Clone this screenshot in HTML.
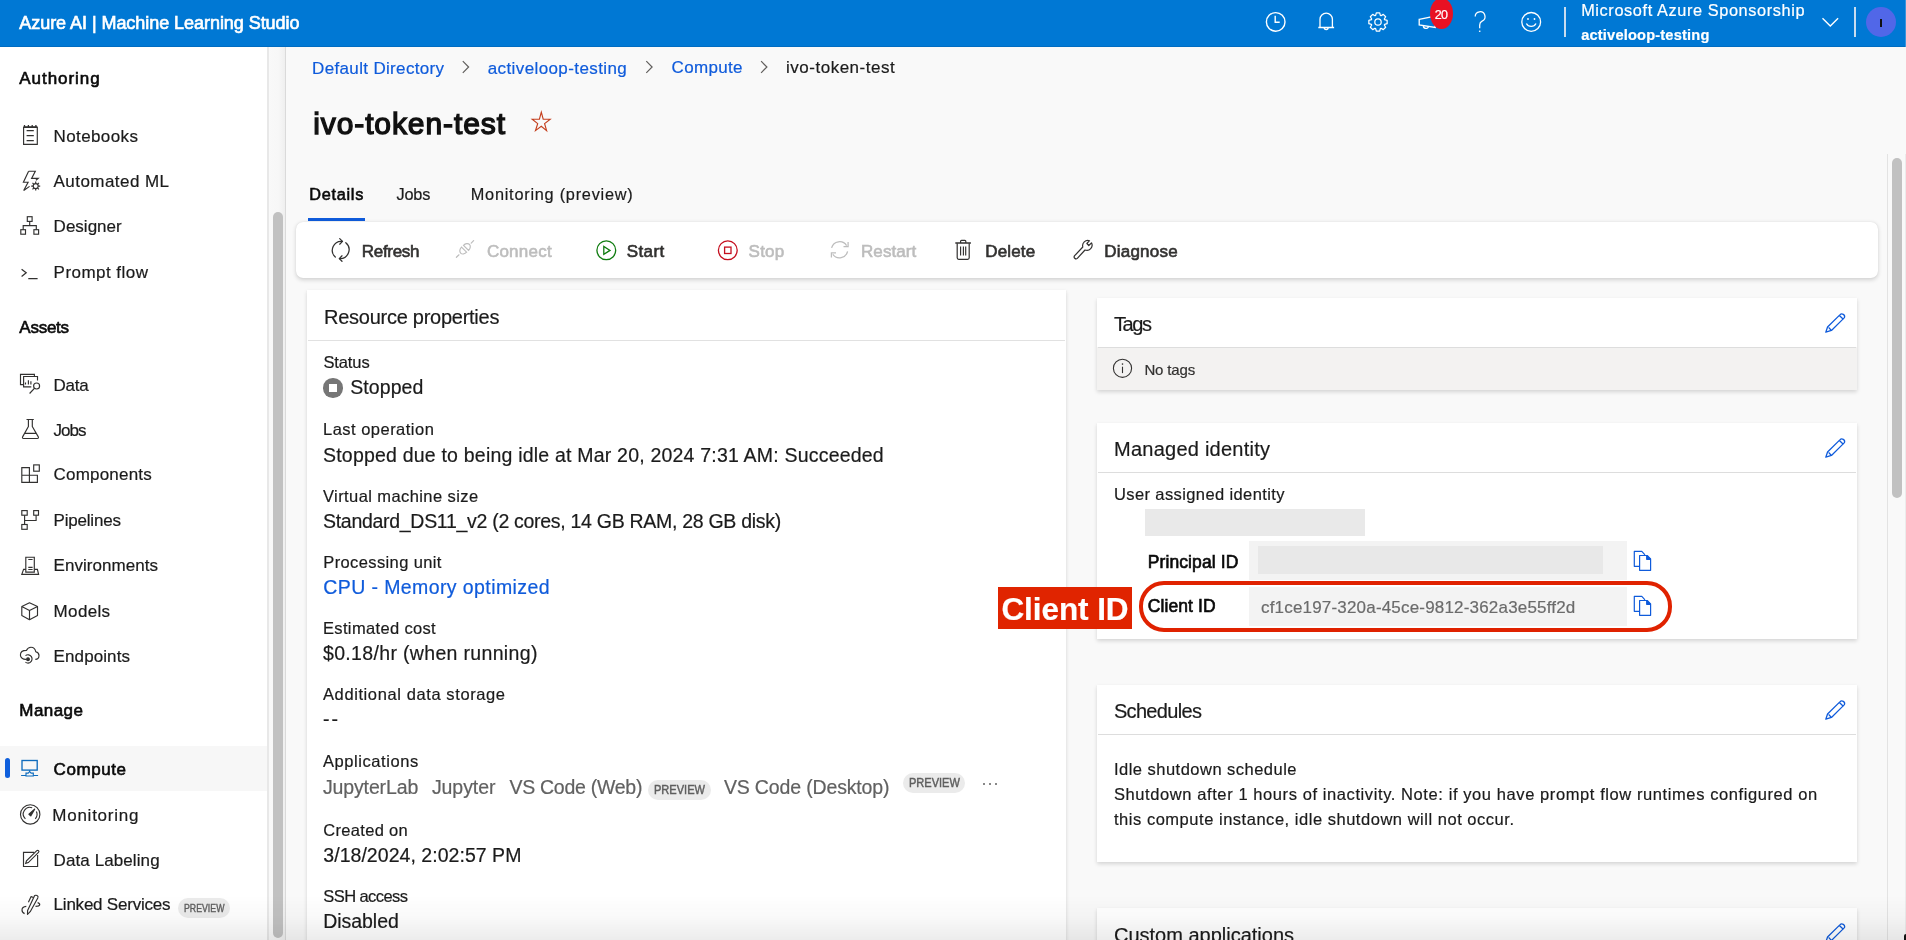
<!DOCTYPE html>
<html><head><meta charset="utf-8">
<style>
html,body{margin:0;padding:0;}
body{width:1906px;height:940px;overflow:hidden;position:relative;background:#f9f9f9;font-family:"Liberation Sans",sans-serif;}
.a{position:absolute;box-sizing:border-box;}
.t{position:absolute;white-space:pre;line-height:1;font-family:"Liberation Sans",sans-serif;-webkit-text-stroke:0.2px currentColor;}
svg{position:absolute;overflow:visible;}
.card{position:absolute;background:#fff;box-shadow:0 1.6px 4px rgba(0,0,0,.15),0 0.3px 0.9px rgba(0,0,0,.12);}
.badge{position:absolute;background:#ebebeb;border-radius:10px;color:#5e5e5e;font-size:11.5px;font-weight:700;line-height:20px;text-align:center;letter-spacing:0.2px;font-family:"Liberation Sans",sans-serif;}
</style></head><body>
<!-- header -->
<div class="a" style="left:0;top:0;width:1906px;height:47px;background:#0078d4;"></div>
<div class="a" style="left:0;top:46px;width:1906px;height:1px;background:#006cc1;"></div>
<!-- sidebar -->
<div class="a" style="left:0;top:47px;width:267px;height:893px;background:#fff;"></div>
<div class="a" style="left:267px;top:47px;width:2px;height:893px;background:#e8e8e8;"></div>
<div class="a" style="left:269px;top:47px;width:16px;height:893px;background:linear-gradient(90deg,#f9f9f9 0%,#f7f7f7 60%,#efefef 100%);"></div>
<div class="a" style="left:285px;top:47px;width:1px;height:893px;background:#dadada;"></div>
<div class="a" style="left:272.5px;top:212px;width:10.5px;height:726px;background:#c1c1c1;border-radius:5.5px;"></div>
<!-- selected row -->
<div class="a" style="left:0;top:746px;width:267px;height:45px;background:#f7f7f7;"></div>
<div class="a" style="left:5px;top:758px;width:4.6px;height:20px;background:#0f5fdc;border-radius:3px;"></div>

<!-- sidebar icons -->
<svg style="left:15px;top:120px" width="30" height="30" viewBox="0 0 30 30" fill="none" stroke="#323130" stroke-width="1.15">
 <path d="M8.6 7.3h13.7v17H8.6z"/>
 <path d="M8.6 7.1h13.7" stroke-width="1.7"/>
 <path d="M9.5 5v2M13.4 5v2M17.2 5v2M20.9 5v2" stroke-width="1.3"/>
 <path d="M11.6 10.6h7.2M11.6 15.6h7.2M11.6 20.6h7.2" stroke-width="1.25"/>
</svg>
<svg style="left:15px;top:165px" width="30" height="30" viewBox="0 0 30 30" fill="none" stroke="#323130" stroke-width="1.15" stroke-linejoin="miter">
 <path d="M28.6 171.2H35.3L31.6 178.4H38.2L35.9 180.3" transform="translate(-15 -165)"/>
 <path d="M28.6 171.2L23.4 182.2H28.1L23.7 190.5L29.6 186.4" transform="translate(-15 -165)"/>
 <circle cx="20.7" cy="21.1" r="2.5"/>
 <path d="M20.7 16.6v2M20.7 23.6v2M16.2 21.1h2M23.2 21.1h2M17.5 17.9l1.4 1.4M22.5 22.9l1.4 1.4M17.5 24.3l1.4-1.4M22.5 19.3l1.4-1.4" stroke-width="1.2"/>
</svg>
<svg style="left:15px;top:210px" width="30" height="30" viewBox="0 0 30 30" fill="none" stroke="#323130" stroke-width="1.15">
 <rect x="12.3" y="6.7" width="4.8" height="4.7"/>
 <rect x="5.8" y="19.7" width="4.7" height="4.5"/>
 <rect x="18.9" y="19.7" width="4.7" height="4.5"/>
 <path d="M14.7 11.4v4.2M8.2 19.7v-4.1h13.1v4.1"/>
</svg>
<svg style="left:15px;top:262px" width="30" height="20" viewBox="0 0 30 20" fill="none" stroke="#323130" stroke-width="1.25">
 <path d="M6.6 7.2l4.6 3.6-4.6 3.6M13.3 16.6h9.3"/>
</svg>
<svg style="left:15px;top:370px" width="30" height="30" viewBox="0 0 30 30" fill="none" stroke="#323130" stroke-width="1.15">
 <path d="M8.4 14.6H5.5V4.3h13.9v2.1"/>
 <path d="M16.3 16.8H8.6V6.5h13.9v4.1"/>
 <path d="M10.5 14.6v-2.2M13.4 14.6v-4.3M15.9 14.6v-3.3"/>
 <circle cx="21.6" cy="16" r="3"/>
 <path d="M19.4 18.3l-4.8 5.2"/>
</svg>
<svg style="left:15px;top:415px" width="30" height="30" viewBox="0 0 30 30" fill="none" stroke="#323130" stroke-width="1.15" stroke-linejoin="round">
 <path d="M11.5 4.5h7.3M13.4 4.6v6.9L7.6 21.9c-.4.8 0 1.6.9 1.6h13.9c.9 0 1.3-.8.9-1.6L17.3 11.5V4.6M9.6 18.4h11.1"/>
</svg>
<svg style="left:15px;top:460px" width="30" height="30" viewBox="0 0 30 30" fill="none" stroke="#323130" stroke-width="1.15">
 <path d="M6.8 7.6h7.6v14.7H6.8zM6.8 15.2h15.6v7.1H14.4"/>
 <rect x="18.7" y="4.9" width="5.6" height="6.3"/>
</svg>
<svg style="left:15px;top:505px" width="30" height="30" viewBox="0 0 30 30" fill="none" stroke="#323130" stroke-width="1.15">
 <rect x="6.8" y="5.6" width="5.4" height="4.6"/>
 <rect x="18.7" y="5.6" width="4.8" height="4.6"/>
 <rect x="6.8" y="19.5" width="5.4" height="4.8"/>
 <path d="M9.6 10.2v9.3M21.1 10.2v5.3H9.6"/>
</svg>
<svg style="left:15px;top:551px" width="30" height="30" viewBox="0 0 30 30" fill="none" stroke="#323130" stroke-width="1.15">
 <path d="M10.8 21.1V6.2h8.5v14.9z"/>
 <path d="M13.3 8.5h4.3M13.3 16.4h4.3M13.3 18.5h4.3" stroke-width="1.1"/>
 <path d="M10.8 18.4H8.6L6.8 23.4h16.8l-1.2-5H19.3"/>
</svg>
<svg style="left:15px;top:596px" width="30" height="30" viewBox="0 0 30 30" fill="none" stroke="#323130" stroke-width="1.15" stroke-linejoin="round">
 <path d="M14.5 6.8l8 3.7v9l-8 4.2-7.7-4.2v-9zM6.8 10.5l7.7 3.9 8-3.9M14.5 14.4v9.3"/>
</svg>
<svg style="left:15px;top:641px" width="30" height="30" viewBox="0 0 30 30" fill="none" stroke="#323130" stroke-width="1.15">
 <path d="M11 18.4c-3 .1-5.6-1.6-5.6-4.4 0-2.6 2-4.6 6-4.6 1-2.2 2.6-3.2 4.6-3.2 2.6 0 4.2 1.8 4.8 4.6 2 .5 3.2 2 3.2 3.7 0 2.3-1.6 3.9-3.7 3.9"/>
 <path d="M10.5 14.6c1.8-1.4 4.6-1 5.9 1 1.3 2.1.6 4.9-1.4 6-1.4.7-3.2.6-4.6-.5"/>
 <circle cx="13" cy="18.2" r="1.4" fill="#323130"/>
</svg>
<svg style="left:15px;top:753px" width="30" height="30" viewBox="0 0 30 30" fill="none" stroke="#0f6cbd" stroke-width="1.35">
 <rect x="7" y="7.5" width="15.2" height="9.6"/>
 <path d="M14.6 17.2v1.4l-1.4 1.5h-2.2v2.9h7.3v-2.9h-2.2l-1.4-1.5" stroke-width="1.15"/>
 <path d="M6.1 22.5h4.9M18.3 22.5h4.8" stroke-width="1.15"/>
</svg>
<svg style="left:15px;top:799px" width="30" height="30" viewBox="0 0 30 30" fill="none" stroke="#323130" stroke-width="1.15">
 <circle cx="15.2" cy="15.4" r="9.7"/>
 <path d="M10.4 19.8A6.6 6.6 0 0 1 17.2 8.8"/>
 <path d="M21.4 12.5a6.6 6.6 0 0 1-1.1 7.3"/>
 <path d="M14 15.3l5.6-5.1-3.9 6.6z" fill="#323130" stroke-width="1.3" stroke-linejoin="round"/>
</svg>
<svg style="left:15px;top:844px" width="30" height="30" viewBox="0 0 30 30" fill="none" stroke="#323130" stroke-width="1.15">
 <path d="M19.2 8.4H8.5v14.1h14.1V11"/>
 <path d="M21.8 6.7a1.2 1.2 0 0 1 1.7 1.7L13.3 18.6l-2.6.8.8-2.6z"/>
</svg>
<svg style="left:15px;top:889px" width="30" height="30" viewBox="0 0 30 30" fill="none" stroke="#323130" stroke-width="1.15" stroke-linejoin="round">
 <path d="M19.4 6.9c.5-.8 1.8-.9 2.7-.3.9.5 1.1 1.6.7 2.4L15.2 22.7l-2.7 2.6.1-3.8z"/>
 <path d="M18.5 8.5l-2.4-.9-2.7 5.6"/>
 <path d="M11.3 17.4c-2.4.2-4.3 1.6-4.3 3.6 0 1.8 1.3 3.1 2.6 3.6"/>
 <path d="M22.6 13.6c1.5.4 2.3 1.3 2.1 2.3-.2 1-1.3 1.5-4.2 1.5"/>
</svg>
<div class="a" style="left:178.2px;top:898px;width:51.6px;height:19.7px;background:#ebebeb;border-radius:10px;"></div>

<!-- header icons -->
<svg style="left:1264px;top:10px" width="24" height="24" viewBox="0 0 24 24" fill="none" stroke="#fff" stroke-width="1.4">
 <circle cx="11.7" cy="11.9" r="9.3"/>
 <path d="M11.2 5.7v6.6h4.5"/>
</svg>
<svg style="left:1317px;top:12px" width="18" height="20" viewBox="0 0 18 20" fill="none" stroke="#fff" stroke-width="1.3">
 <path d="M3 15.4V7.3a6.2 6.2 0 0 1 12.4 0v8.1M1.3 15.5h15.8M7.2 15.6a2 2 0 0 0 4 0"/>
</svg>
<svg style="left:1366.2px;top:9.9px" width="24" height="24" viewBox="0 0 24 24" fill="none" stroke="#fff" stroke-width="1.25" stroke-linejoin="round">
 <path d="M9.66 5.40 L10.31 2.86 L13.69 2.86 L14.34 5.40 L15.01 5.68 L17.27 4.34 L19.66 6.73 L18.32 8.99 L18.60 9.66 L21.14 10.31 L21.14 13.69 L18.60 14.34 L18.32 15.01 L19.66 17.27 L17.27 19.66 L15.01 18.32 L14.34 18.60 L13.69 21.14 L10.31 21.14 L9.66 18.60 L8.99 18.32 L6.73 19.66 L4.34 17.27 L5.68 15.01 L5.40 14.34 L2.86 13.69 L2.86 10.31 L5.40 9.66 L5.68 8.99 L4.34 6.73 L6.73 4.34 L8.99 5.68Z"/>
 <circle cx="12" cy="12" r="3.2"/>
</svg>
<svg style="left:1416.6px;top:14.3px" width="22" height="18" viewBox="0 0 22 18" fill="none" stroke="#fff" stroke-width="1.3">
 <path d="M2.2 5.3l16-3.2v11.4l-16-2.6z"/>
 <path d="M6.5 11.5a2.5 2.5 0 0 0 5 .8"/>
</svg>
<div class="a" style="left:1430px;top:-2px;width:23px;height:31px;background:#e81123;border-radius:50%;"></div>
<svg style="left:1472px;top:10px" width="16" height="24" viewBox="0 0 16 24" fill="none" stroke="#fff" stroke-width="1.25">
 <path d="M3.2 6.6a4.9 4.9 0 1 1 6.9 4.5c-1.6.8-2.4 2-2.4 3.9v3.2"/>
 <path d="M7.7 20.6v1.3" stroke-width="1.5"/>
</svg>
<svg style="left:1520px;top:10px" width="24" height="24" viewBox="0 0 24 24" fill="none" stroke="#fff" stroke-width="1.3">
 <circle cx="11.2" cy="11.9" r="9.4"/>
 <path d="M6.4 13.5a5.4 5.4 0 0 0 9.6 0"/>
 <circle cx="8" cy="9" r="0.9" fill="#fff" stroke="none"/>
 <circle cx="14.5" cy="9" r="0.9" fill="#fff" stroke="none"/>
</svg>
<div class="a" style="left:1564px;top:7px;width:1.5px;height:30px;background:#c9dcef;"></div>
<svg style="left:1821px;top:16px" width="20" height="12" viewBox="0 0 20 12" fill="none" stroke="#fff" stroke-width="1.4">
 <path d="M1.5 2.2l7.8 7.8 7.8-7.8"/>
</svg>
<div class="a" style="left:1854px;top:7px;width:1.5px;height:30px;background:#c9dcef;"></div>
<div class="a" style="left:1866px;top:6.5px;width:30px;height:30px;background:#5167e8;border-radius:50%;"></div>
<div class="a" style="left:1880px;top:19px;width:1.5px;height:7.5px;background:#111;"></div>
<div class="a" style="left:1905px;top:0;width:1px;height:47px;background:#3a94dc;"></div>

<!-- tab underline -->
<div class="a" style="left:308px;top:218px;width:57px;height:2.8px;background:#0f5bdb;"></div>

<!-- toolbar card -->
<div class="a" style="left:295.5px;top:221.5px;width:1582px;height:56.5px;background:#fff;border-radius:7px;box-shadow:0 1.5px 4px rgba(0,0,0,.16),0 0 1px rgba(0,0,0,.10);"></div>
<svg style="left:326px;top:235px" width="30" height="30" viewBox="0 0 30 30" fill="none" stroke="#323130" stroke-width="1.25" stroke-linecap="round" stroke-linejoin="round">
 <path d="M16.4 6.4A9 9 0 0 0 9.3 22"/>
 <path d="M13.7 3.6l2.8 2.8-2.8 2.8"/>
 <path d="M19.8 7.7A9 9 0 0 1 13.5 23.6"/>
 <path d="M16 20.8l-2.7 2.8 2.7 2.7"/>
</svg>
<svg style="left:450px;top:235px" width="30" height="30" viewBox="0 0 30 30" fill="none" stroke="#bdbdbd" stroke-width="1.2" stroke-linecap="round">
 <path d="M11.5 12.1L16.6 17.2A3.6 4.8 45 0 1 11.5 12.1Z"/>
 <path d="M13.5 10.3L18.6 15.4A3.6 4.8 45 0 0 13.5 10.3Z"/>
 <path d="M6.4 22.3l2.6-2.5M21.2 8.1l2.4-2.4"/>
</svg>
<svg style="left:595px;top:238.5px" width="23" height="23" viewBox="0 0 23 23" fill="none" stroke="#107c10" stroke-width="1.3">
 <circle cx="11.3" cy="11.3" r="9.4"/>
 <path d="M8.8 7.5v7.8l6.2-3.9z"/>
</svg>
<svg style="left:716px;top:238.5px" width="23" height="23" viewBox="0 0 23 23" fill="none" stroke="#c50f1f" stroke-width="1.3">
 <circle cx="11.8" cy="11.3" r="9.4"/>
 <rect x="8.6" y="8.1" width="6.4" height="6.4"/>
</svg>
<svg style="left:825px;top:235px" width="30" height="30" viewBox="0 0 30 30" fill="none" stroke="#bdbdbd" stroke-width="1.25">
 <path d="M6.6 12.8A8.3 8.3 0 0 1 21.6 10.6"/>
 <path d="M23.1 7v4.7h-4.6"/>
 <path d="M22.6 16.3A8.3 8.3 0 0 1 7.8 19.4"/>
 <path d="M6.4 22.6v-4.7H11"/>
</svg>
<svg style="left:950px;top:236px" width="30" height="28" viewBox="0 0 30 28" fill="none" stroke="#323130" stroke-width="1.2">
 <path d="M5.3 7h15.6" stroke-width="1.5"/>
 <path d="M10.6 7V5.2a.9.9 0 0 1 .9-.9h3.4a.9.9 0 0 1 .9.9V7"/>
 <path d="M7.2 7.2v14.6a1.5 1.5 0 0 0 1.5 1.5h9a1.5 1.5 0 0 0 1.5-1.5V7.2"/>
 <path d="M10.6 10.4v9.2M13.4 10.4v9.2M15.7 10.4v9.2" stroke-width="1.15"/>
</svg>
<svg style="left:1068px;top:236px" width="30" height="28" viewBox="0 0 30 28" fill="none" stroke="#323130" stroke-width="1.2" stroke-linejoin="round">
 <path d="M14.8 11A5.2 5.2 0 0 1 21.5 4.7L18.9 7.5 20.8 9.5 23.5 6.8A5.2 5.2 0 0 1 17 14L9.34 22.34A1.9 1.9 0 0 1 6.66 19.66Z"/>
</svg>

<!-- resource properties card -->
<div class="card" style="left:307px;top:290px;width:759px;height:700px;"></div>
<div class="a" style="left:308px;top:340px;width:757px;height:1px;background:#e1e1e1;"></div>
<div class="a" style="left:323.4px;top:378.2px;width:19.4px;height:19.4px;background:#767676;border-radius:50%;"></div>
<div class="a" style="left:329px;top:384.3px;width:8.2px;height:7.6px;background:#fff;"></div>
<div class="a" style="left:648.2px;top:780.1px;width:62.7px;height:19.9px;background:#ebebeb;border-radius:10px;"></div>
<div class="a" style="left:903px;top:773.2px;width:61.6px;height:19.6px;background:#ebebeb;border-radius:10px;"></div>
<div class="a" style="left:983px;top:782.5px;width:2.4px;height:2.4px;background:#616161;border-radius:50%;"></div>
<div class="a" style="left:989px;top:782.5px;width:2.4px;height:2.4px;background:#616161;border-radius:50%;"></div>
<div class="a" style="left:995px;top:782.5px;width:2.4px;height:2.4px;background:#616161;border-radius:50%;"></div>

<!-- tags card -->
<div class="card" style="left:1097px;top:298px;width:760px;height:92px;"></div>
<div class="a" style="left:1097px;top:347px;width:760px;height:43px;background:#f3f2f1;"></div>
<div class="a" style="left:1098px;top:347px;width:758px;height:1.2px;background:#dddddd;"></div>
<svg style="left:1112px;top:357.5px" width="21" height="21" viewBox="0 0 21 21" fill="none" stroke="#323130" stroke-width="1.1">
 <circle cx="10.5" cy="10.3" r="9.1"/>
 <path d="M10.5 8.7v6.4"/>
 <circle cx="10.5" cy="6.1" r="0.8" fill="#323130" stroke="none"/>
</svg>

<!-- managed identity card -->
<div class="card" style="left:1097px;top:422.6px;width:760px;height:216.5px;"></div>
<div class="a" style="left:1098px;top:472px;width:758px;height:1.2px;background:#dddddd;"></div>
<div class="a" style="left:1144.5px;top:509.3px;width:220px;height:27px;background:#e9e9e9;"></div>
<div class="a" style="left:1249px;top:541.2px;width:377.7px;height:38.6px;background:#f3f3f3;"></div>
<div class="a" style="left:1258px;top:545.8px;width:344.5px;height:28.5px;background:#e8e8e8;"></div>
<div class="a" style="left:1249px;top:586.8px;width:377.7px;height:39.2px;background:#f3f3f3;"></div>

<!-- schedules card -->
<div class="card" style="left:1097px;top:684.8px;width:760px;height:177px;"></div>
<div class="a" style="left:1098px;top:734px;width:758px;height:1.2px;background:#dddddd;"></div>
<!-- custom apps card -->
<div class="card" style="left:1097px;top:908.2px;width:760px;height:100px;"></div>

<!-- pencils -->
<svg style="left:1820px;top:308px" width="30" height="30" viewBox="0 0 30 30" fill="none" stroke="#0f5bdb" stroke-width="1.3" stroke-linejoin="round">
 <path d="M5.8 24.2L7.55 19.05L19.85 6.85A2.75 2.75 0 0 1 24.45 9.65L11.45 22.45Z"/>
 <path d="M19.4 7.5l3.9 3.7M8.6 19.4l2.6 2.8"/>
</svg>
<svg style="left:1820px;top:432.6px" width="30" height="30" viewBox="0 0 30 30" fill="none" stroke="#0f5bdb" stroke-width="1.3" stroke-linejoin="round">
 <path d="M5.8 24.2L7.55 19.05L19.85 6.85A2.75 2.75 0 0 1 24.45 9.65L11.45 22.45Z"/>
 <path d="M19.4 7.5l3.9 3.7M8.6 19.4l2.6 2.8"/>
</svg>
<svg style="left:1820px;top:694.8px" width="30" height="30" viewBox="0 0 30 30" fill="none" stroke="#0f5bdb" stroke-width="1.3" stroke-linejoin="round">
 <path d="M5.8 24.2L7.55 19.05L19.85 6.85A2.75 2.75 0 0 1 24.45 9.65L11.45 22.45Z"/>
 <path d="M19.4 7.5l3.9 3.7M8.6 19.4l2.6 2.8"/>
</svg>
<svg style="left:1820px;top:918.2px" width="30" height="30" viewBox="0 0 30 30" fill="none" stroke="#0f5bdb" stroke-width="1.3" stroke-linejoin="round">
 <path d="M5.8 24.2L7.55 19.05L19.85 6.85A2.75 2.75 0 0 1 24.45 9.65L11.45 22.45Z"/>
 <path d="M19.4 7.5l3.9 3.7M8.6 19.4l2.6 2.8"/>
</svg>
<!-- copy icons -->
<svg style="left:1628px;top:546px" width="30" height="30" viewBox="0 0 30 30" fill="none" stroke="#0f5bdb" stroke-width="1.2" stroke-linejoin="round">
 <path d="M11.4 20.3H6.3V5.4h7.5l3.2 3.4"/>
 <path d="M11.6 9.5h7.6l3.4 3.4v11.4H11.6z"/>
 <path d="M18.7 9.7v3.6h3.7z" fill="#0f5bdb"/>
</svg>
<svg style="left:1628px;top:591px" width="30" height="30" viewBox="0 0 30 30" fill="none" stroke="#0f5bdb" stroke-width="1.2" stroke-linejoin="round">
 <path d="M11.4 20.3H6.3V5.4h7.5l3.2 3.4"/>
 <path d="M11.6 9.5h7.6l3.4 3.4v11.4H11.6z"/>
 <path d="M18.7 9.7v3.6h3.7z" fill="#0f5bdb"/>
</svg>

<!-- annotation -->
<div class="a" style="left:1139.2px;top:581.3px;width:533.3px;height:50.8px;border:4.8px solid #e02200;border-radius:25px;"></div>
<div class="a" style="left:998px;top:587.2px;width:133.9px;height:41.5px;background:#e02400;"></div>

<!-- right scrollbar -->
<div class="a" style="left:1887px;top:154px;width:1px;height:786px;background:#e3e3e3;"></div>
<div class="a" style="left:1888px;top:154px;width:18px;height:786px;background:#f9f9f9;"></div>
<div class="a" style="left:1892px;top:157.7px;width:10.3px;height:340.5px;background:#c1c1c1;border-radius:5.2px;"></div>
<div class="a" style="left:1905px;top:154px;width:1px;height:786px;background:#ececec;"></div>

<!-- bottom fade -->
<div class="a" style="left:0;top:895px;width:1906px;height:45px;background:linear-gradient(180deg,rgba(0,0,0,0) 0%,rgba(0,0,0,0.025) 50%,rgba(0,0,0,0.075) 100%);z-index:5;"></div>
<!-- breadcrumb chevrons -->
<svg style="left:461px;top:60px" width="10" height="14" viewBox="0 0 10 14" fill="none" stroke="#605e5c" stroke-width="1.2"><path d="M1.8 1.2l5.8 5.8-5.8 5.8"/></svg>
<svg style="left:645px;top:60px" width="10" height="14" viewBox="0 0 10 14" fill="none" stroke="#605e5c" stroke-width="1.2"><path d="M1.3 1.2l5.8 5.8-5.8 5.8"/></svg>
<svg style="left:760px;top:60px" width="10" height="14" viewBox="0 0 10 14" fill="none" stroke="#605e5c" stroke-width="1.2"><path d="M1.1 1.2l5.8 5.8-5.8 5.8"/></svg>
<!-- star -->
<svg style="left:526px;top:106px" width="30" height="30" viewBox="0 0 30 30" fill="none" stroke="#c43e1c" stroke-width="1.15" stroke-linejoin="miter">
 <path d="M15.3 6.2L17.2 13.1L24.2 13.3L18.6 17.6L20.6 24.6L15.3 20.3L9.5 24.6L11.7 17.6L6.2 13.3L13.4 13.1Z"/>
</svg>
<div class="a" style="left:1904.2px;top:933.5px;width:1.8px;height:6.5px;background:#111;border-top-left-radius:2px;z-index:6;"></div>

<div style="position:absolute;left:0;top:0;width:1906px;height:940px;will-change:transform;">
<div class='t' style='left:19.3px;top:14.0px;font-size:18px;font-weight:400;color:#fff;letter-spacing:-0.050px;-webkit-text-stroke:0.65px #fff;'>Azure AI | Machine Learning Studio</div>
<div class='t' style='left:1581.2px;top:1.9px;font-size:16.3px;font-weight:400;color:#fff;letter-spacing:0.618px;'>Microsoft Azure Sponsorship</div>
<div class='t' style='left:1581.2px;top:27.7px;font-size:14.6px;font-weight:700;color:#fff;letter-spacing:0.190px;'>activeloop-testing</div>
<div class='t' style='left:1434.8px;top:9.0px;font-size:12.5px;font-weight:400;color:#fff;letter-spacing:-0.806px;'>20</div>
<div class='t' style='left:19.3px;top:69.6px;font-size:17px;font-weight:400;color:#0a0a0a;letter-spacing:0.952px;-webkit-text-stroke:0.61px #0a0a0a;'>Authoring</div>
<div class='t' style='left:53.6px;top:127.5px;font-size:17px;font-weight:400;color:#1b1b1b;letter-spacing:0.377px;'>Notebooks</div>
<div class='t' style='left:53.6px;top:173.3px;font-size:17px;font-weight:400;color:#1b1b1b;letter-spacing:0.440px;'>Automated ML</div>
<div class='t' style='left:53.6px;top:218.2px;font-size:17px;font-weight:400;color:#1b1b1b;letter-spacing:0.008px;'>Designer</div>
<div class='t' style='left:53.6px;top:263.8px;font-size:17px;font-weight:400;color:#1b1b1b;letter-spacing:0.465px;'>Prompt flow</div>
<div class='t' style='left:19.3px;top:318.6px;font-size:17px;font-weight:400;color:#0a0a0a;letter-spacing:-0.246px;-webkit-text-stroke:0.61px #0a0a0a;'>Assets</div>
<div class='t' style='left:53.6px;top:376.6px;font-size:17px;font-weight:400;color:#1b1b1b;letter-spacing:-0.307px;'>Data</div>
<div class='t' style='left:53.6px;top:421.8px;font-size:17px;font-weight:400;color:#1b1b1b;letter-spacing:-0.974px;'>Jobs</div>
<div class='t' style='left:53.6px;top:466.4px;font-size:17px;font-weight:400;color:#1b1b1b;letter-spacing:0.190px;'>Components</div>
<div class='t' style='left:53.6px;top:511.9px;font-size:17px;font-weight:400;color:#1b1b1b;letter-spacing:-0.213px;'>Pipelines</div>
<div class='t' style='left:53.6px;top:557.4px;font-size:17px;font-weight:400;color:#1b1b1b;letter-spacing:0.042px;'>Environments</div>
<div class='t' style='left:53.6px;top:602.9px;font-size:17px;font-weight:400;color:#1b1b1b;letter-spacing:0.338px;'>Models</div>
<div class='t' style='left:53.6px;top:647.6px;font-size:17px;font-weight:400;color:#1b1b1b;letter-spacing:0.097px;'>Endpoints</div>
<div class='t' style='left:19.3px;top:702.4px;font-size:17px;font-weight:400;color:#0a0a0a;letter-spacing:0.433px;-webkit-text-stroke:0.61px #0a0a0a;'>Manage</div>
<div class='t' style='left:53.6px;top:761.1px;font-size:17px;font-weight:400;color:#0a0a0a;letter-spacing:0.553px;-webkit-text-stroke:0.61px #0a0a0a;'>Compute</div>
<div class='t' style='left:52.3px;top:806.6px;font-size:17px;font-weight:400;color:#1b1b1b;letter-spacing:0.747px;'>Monitoring</div>
<div class='t' style='left:53.6px;top:851.8px;font-size:17px;font-weight:400;color:#1b1b1b;letter-spacing:0.090px;'>Data Labeling</div>
<div class='t' style='left:53.6px;top:896.4px;font-size:17px;font-weight:400;color:#1b1b1b;letter-spacing:-0.223px;'>Linked Services</div>
<div class='t' style='left:312.1px;top:59.6px;font-size:17px;font-weight:400;color:#0f5bdb;letter-spacing:0.337px;'>Default Directory</div>
<div class='t' style='left:487.7px;top:59.6px;font-size:17px;font-weight:400;color:#0f5bdb;letter-spacing:0.399px;'>activeloop-testing</div>
<div class='t' style='left:671.6px;top:59.4px;font-size:17px;font-weight:400;color:#0f5bdb;letter-spacing:0.303px;'>Compute</div>
<div class='t' style='left:786.0px;top:59.4px;font-size:17px;font-weight:400;color:#1b1b1b;letter-spacing:0.512px;'>ivo-token-test</div>
<div class='t' style='left:313.2px;top:108.5px;font-size:30px;font-weight:400;color:#111;letter-spacing:0.902px;-webkit-text-stroke:1.35px #111;'>ivo-token-test</div>
<div class='t' style='left:309.2px;top:186.0px;font-size:16.3px;font-weight:400;color:#0a0a0a;letter-spacing:0.720px;-webkit-text-stroke:0.59px #0a0a0a;'>Details</div>
<div class='t' style='left:396.4px;top:186.0px;font-size:16.3px;font-weight:400;color:#1b1b1b;letter-spacing:-0.135px;'>Jobs</div>
<div class='t' style='left:470.8px;top:186.0px;font-size:16.3px;font-weight:400;color:#1b1b1b;letter-spacing:0.758px;'>Monitoring (preview)</div>
<div class='t' style='left:361.8px;top:242.6px;font-size:17px;font-weight:400;color:#323130;letter-spacing:-0.305px;-webkit-text-stroke:0.61px #323130;'>Refresh</div>
<div class='t' style='left:486.9px;top:242.6px;font-size:17px;font-weight:400;color:#bdbdbd;letter-spacing:0.245px;-webkit-text-stroke:0.61px #bdbdbd;'>Connect</div>
<div class='t' style='left:626.7px;top:242.6px;font-size:17px;font-weight:400;color:#323130;letter-spacing:0.398px;-webkit-text-stroke:0.61px #323130;'>Start</div>
<div class='t' style='left:748.6px;top:242.6px;font-size:17px;font-weight:400;color:#bdbdbd;letter-spacing:0.205px;-webkit-text-stroke:0.61px #bdbdbd;'>Stop</div>
<div class='t' style='left:861.0px;top:242.6px;font-size:17px;font-weight:400;color:#bdbdbd;letter-spacing:0.084px;-webkit-text-stroke:0.61px #bdbdbd;'>Restart</div>
<div class='t' style='left:985.3px;top:242.6px;font-size:17px;font-weight:400;color:#323130;letter-spacing:0.132px;-webkit-text-stroke:0.61px #323130;'>Delete</div>
<div class='t' style='left:1104.2px;top:242.6px;font-size:17px;font-weight:400;color:#323130;letter-spacing:0.239px;-webkit-text-stroke:0.61px #323130;'>Diagnose</div>
<div class='t' style='left:324.0px;top:307.1px;font-size:20px;font-weight:400;color:#1b1b1b;letter-spacing:-0.261px;'>Resource properties</div>
<div class='t' style='left:323.4px;top:353.8px;font-size:16.5px;font-weight:400;color:#1b1b1b;letter-spacing:-0.096px;'>Status</div>
<div class='t' style='left:350.3px;top:378.3px;font-size:19.5px;font-weight:400;color:#1b1b1b;letter-spacing:0.057px;'>Stopped</div>
<div class='t' style='left:323.0px;top:421.1px;font-size:16.5px;font-weight:400;color:#1b1b1b;letter-spacing:0.479px;'>Last operation</div>
<div class='t' style='left:323.0px;top:446.0px;font-size:19.5px;font-weight:400;color:#1b1b1b;letter-spacing:0.206px;'>Stopped due to being idle at Mar 20, 2024 7:31 AM: Succeeded</div>
<div class='t' style='left:323.0px;top:487.7px;font-size:16.5px;font-weight:400;color:#1b1b1b;letter-spacing:0.407px;'>Virtual machine size</div>
<div class='t' style='left:323.0px;top:512.4px;font-size:19.5px;font-weight:400;color:#1b1b1b;letter-spacing:-0.292px;'>Standard_DS11_v2 (2 cores, 14 GB RAM, 28 GB disk)</div>
<div class='t' style='left:323.3px;top:553.6px;font-size:16.5px;font-weight:400;color:#1b1b1b;letter-spacing:0.378px;'>Processing unit</div>
<div class='t' style='left:323.3px;top:578.0px;font-size:19.5px;font-weight:400;color:#0f5bdb;letter-spacing:0.400px;'>CPU - Memory optimized</div>
<div class='t' style='left:323.0px;top:619.5px;font-size:16.5px;font-weight:400;color:#1b1b1b;letter-spacing:0.345px;'>Estimated cost</div>
<div class='t' style='left:323.0px;top:644.1px;font-size:19.5px;font-weight:400;color:#1b1b1b;letter-spacing:0.334px;'>$0.18/hr (when running)</div>
<div class='t' style='left:323.0px;top:685.6px;font-size:16.5px;font-weight:400;color:#1b1b1b;letter-spacing:0.600px;'>Additional data storage</div>
<div class='t' style='left:323.0px;top:710.0px;font-size:19.5px;font-weight:400;color:#1b1b1b;letter-spacing:1.900px;'>--</div>
<div class='t' style='left:322.9px;top:753.0px;font-size:16.5px;font-weight:400;color:#1b1b1b;letter-spacing:0.583px;'>Applications</div>
<div class='t' style='left:322.9px;top:778.1px;font-size:19.5px;font-weight:400;color:#616161;letter-spacing:-0.120px;'>JupyterLab</div>
<div class='t' style='left:431.9px;top:778.1px;font-size:19.5px;font-weight:400;color:#616161;letter-spacing:-0.059px;'>Jupyter</div>
<div class='t' style='left:509.4px;top:778.1px;font-size:19.5px;font-weight:400;color:#616161;letter-spacing:-0.267px;'>VS Code (Web)</div>
<div class='t' style='left:723.9px;top:778.1px;font-size:19.5px;font-weight:400;color:#616161;letter-spacing:-0.150px;'>VS Code (Desktop)</div>
<div class='t' style='left:323.3px;top:821.6px;font-size:16.5px;font-weight:400;color:#1b1b1b;letter-spacing:0.307px;'>Created on</div>
<div class='t' style='left:323.3px;top:845.7px;font-size:19.5px;font-weight:400;color:#1b1b1b;letter-spacing:0.039px;'>3/18/2024, 2:02:57 PM</div>
<div class='t' style='left:323.3px;top:887.7px;font-size:16.5px;font-weight:400;color:#1b1b1b;letter-spacing:-0.575px;'>SSH access</div>
<div class='t' style='left:323.3px;top:912.2px;font-size:19.5px;font-weight:400;color:#1b1b1b;letter-spacing:-0.056px;'>Disabled</div>
<div class='t' style='left:1114.0px;top:314.1px;font-size:20px;font-weight:400;color:#1b1b1b;letter-spacing:-1.417px;'>Tags</div>
<div class='t' style='left:1144.4px;top:362.1px;font-size:15px;font-weight:400;color:#323130;letter-spacing:-0.134px;'>No tags</div>
<div class='t' style='left:1114.0px;top:439.2px;font-size:20px;font-weight:400;color:#1b1b1b;letter-spacing:0.245px;'>Managed identity</div>
<div class='t' style='left:1114.0px;top:486.2px;font-size:16.5px;font-weight:400;color:#1b1b1b;letter-spacing:0.388px;'>User assigned identity</div>
<div class='t' style='left:1147.7px;top:553.5px;font-size:17.5px;font-weight:400;color:#0a0a0a;letter-spacing:0.111px;-webkit-text-stroke:0.63px #0a0a0a;'>Principal ID</div>
<div class='t' style='left:1147.7px;top:598.1px;font-size:17.5px;font-weight:400;color:#0a0a0a;letter-spacing:0.111px;-webkit-text-stroke:0.63px #0a0a0a;'>Client ID</div>
<div class='t' style='left:1261.0px;top:598.8px;font-size:17px;font-weight:400;color:#6b6b6b;letter-spacing:0.185px;'>cf1ce197-320a-45ce-9812-362a3e55ff2d</div>
<div class='t' style='left:1113.9px;top:701.3px;font-size:20px;font-weight:400;color:#1b1b1b;letter-spacing:-0.663px;'>Schedules</div>
<div class='t' style='left:1114.0px;top:761.0px;font-size:16.5px;font-weight:400;color:#1b1b1b;letter-spacing:0.478px;'>Idle shutdown schedule</div>
<div class='t' style='left:1114.0px;top:785.9px;font-size:16.5px;font-weight:400;color:#1b1b1b;letter-spacing:0.588px;'>Shutdown after 1 hours of inactivity. Note: if you have prompt flow runtimes configured on</div>
<div class='t' style='left:1114.0px;top:810.8px;font-size:16.5px;font-weight:400;color:#1b1b1b;letter-spacing:0.524px;'>this compute instance, idle shutdown will not occur.</div>
<div class='t' style='left:1114.0px;top:924.8px;font-size:20px;font-weight:400;color:#1b1b1b;letter-spacing:-0.005px;'>Custom applications</div>
<div class='t' style='left:183.8px;top:902.5px;font-size:10.7px;font-weight:400;color:#5e5e5e;letter-spacing:0.000px;-webkit-text-stroke:0.39px #5e5e5e;transform:scaleX(0.8195);transform-origin:0 0;'>PREVIEW</div>
<div class='t' style='left:654.0px;top:784.3px;font-size:12.8px;font-weight:400;color:#5e5e5e;letter-spacing:0.000px;-webkit-text-stroke:0.46px #5e5e5e;transform:scaleX(0.8639);transform-origin:0 0;'>PREVIEW</div>
<div class='t' style='left:908.5px;top:777.4px;font-size:12.4px;font-weight:400;color:#5e5e5e;letter-spacing:0.000px;-webkit-text-stroke:0.45px #5e5e5e;transform:scaleX(0.8905);transform-origin:0 0;'>PREVIEW</div>
<div class='t' style='left:1001.4px;top:593.6px;font-size:31.5px;font-weight:700;color:#fff;letter-spacing:-0.071px;'>Client ID</div>
</div>
</body></html>
